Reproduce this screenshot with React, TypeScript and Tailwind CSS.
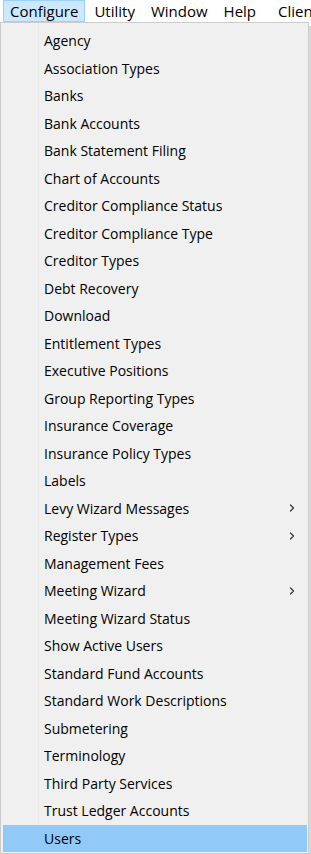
import { ChevronRight } from 'lucide-react';

const items: { label: string; sub?: boolean }[] = [
  { label: 'Agency' },
  { label: 'Association Types' },
  { label: 'Banks' },
  { label: 'Bank Accounts' },
  { label: 'Bank Statement Filing' },
  { label: 'Chart of Accounts' },
  { label: 'Creditor Compliance Status' },
  { label: 'Creditor Compliance Type' },
  { label: 'Creditor Types' },
  { label: 'Debt Recovery' },
  { label: 'Download' },
  { label: 'Entitlement Types' },
  { label: 'Executive Positions' },
  { label: 'Group Reporting Types' },
  { label: 'Insurance Coverage' },
  { label: 'Insurance Policy Types' },
  { label: 'Labels' },
  { label: 'Levy Wizard Messages', sub: true },
  { label: 'Register Types', sub: true },
  { label: 'Management Fees' },
  { label: 'Meeting Wizard', sub: true },
  { label: 'Meeting Wizard Status' },
  { label: 'Show Active Users' },
  { label: 'Standard Fund Accounts' },
  { label: 'Standard Work Descriptions' },
  { label: 'Submetering' },
  { label: 'Terminology' },
  { label: 'Third Party Services' },
  { label: 'Trust Ledger Accounts' },
  { label: 'Users' },
];

export default function App() {
  return (
    <div className="w-[311px] h-[854px] overflow-hidden bg-white text-[14px] text-black font-['Open_Sans','Noto_Sans',sans-serif]">
      {/* Menu bar */}
      <div className="flex h-[22px] items-center whitespace-nowrap text-[15px]">
        <div className="ml-[3px] h-[22px] px-[6px] flex items-center bg-[#cce8ff] border border-[#99d1ff]">Configure</div>
        <div className="pl-[9px] pr-[8px]">Utility</div>
        <div className="px-[8px]">Window</div>
        <div className="px-[8px]">Help</div>
        <div className="pl-[14px]">Client</div>
      </div>

      {/* Dropdown */}
      <div className="flex">
        <div className="w-[309px] h-[832px] bg-[#f0f0f0] border border-[#cccccc] pt-[4px] pl-[2px] pr-[1px] relative">
          <div className="absolute left-[37px] top-0 bottom-0 w-px bg-[#e9e9e9]" />
          {items.map((it, i) => (
            <div
              key={i}
              className={`relative flex items-center h-[27.5px] pl-[41px] pr-[9px] ${i === items.length - 1 ? 'bg-[#91c9f7]' : ''}`}
            >
              <span className="flex-1">{it.label}</span>
              {it.sub && <ChevronRight className="w-[12px] h-[12px] text-[#333]" strokeWidth={2.4} />}
            </div>
          ))}
        </div>
        <div className="w-[2px] mt-[4px] bg-[#d9d9d9]" />
      </div>
    </div>
  );
}
